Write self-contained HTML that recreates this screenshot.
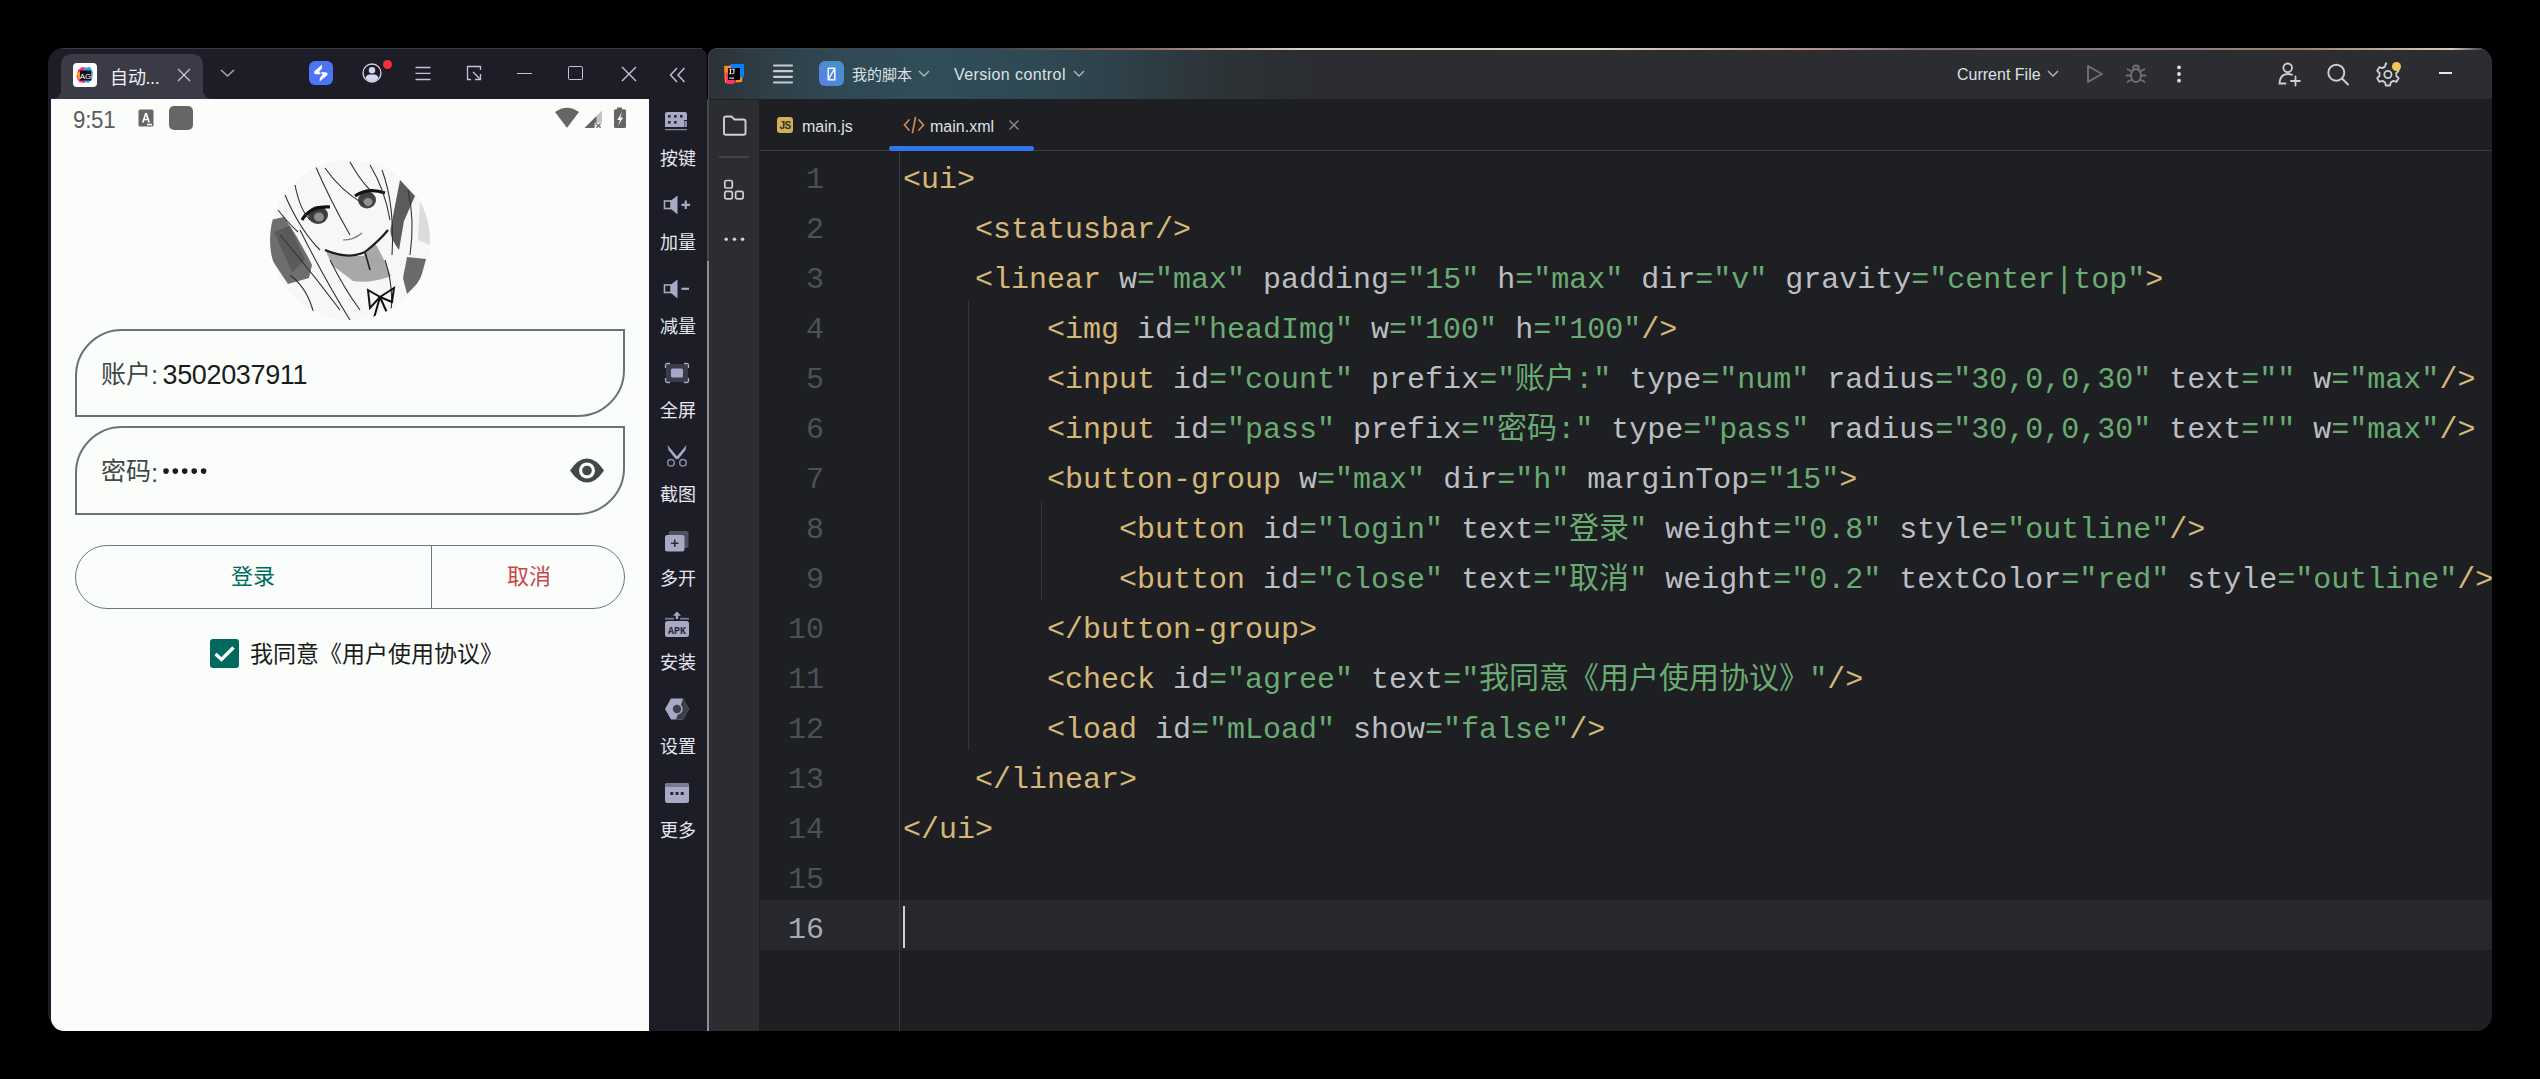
<!DOCTYPE html>
<html lang="zh-CN"><head><meta charset="utf-8">
<style>
*{margin:0;padding:0;box-sizing:border-box}
html,body{width:2540px;height:1079px;overflow:hidden;background:#000;font-family:"Liberation Sans",sans-serif;position:relative}
div,span.abs,svg{position:absolute}
.cl,.cl *{position:static}
.code div{position:relative}
.code{left:0;top:0;font-family:"Liberation Mono",monospace;font-size:30px;white-space:pre;line-height:50px}
.t{color:#d5b778}.a{color:#bcbec4}.v{color:#6aab73}
.ln{left:0;width:116px;text-align:right;font-family:"Liberation Mono",monospace;font-size:30px;color:#4b5059;line-height:50px;white-space:pre}
.cj{font-family:"Liberation Serif",serif;font-style:normal;line-height:10px;font-weight:300}
.cl{height:50px;line-height:50px;white-space:pre}
.sl{left:649px;width:58px;margin-top:2px;text-align:center;color:#e6e6ee;font-size:18px;line-height:18px}
</style></head><body>

<!-- ===== EMULATOR ===== -->
<div id="emu" style="left:48px;top:48px;width:659px;height:983px;background:#1d1d28;border-radius:15px 9px 0 19px"></div>
<div id="etab" style="left:61px;top:54px;width:142px;height:45px;background:#3b3b47;border-radius:10px 10px 0 0"></div>
<div id="phone" style="left:51px;top:99px;width:598px;height:932px;background:#fbfdfa;border-bottom-left-radius:13px"></div>

<!-- status bar -->
<div style="left:73px;top:104.5px;font-size:24px;line-height:30px;color:#5c5c5c;white-space:nowrap;letter-spacing:-0.3px;transform:scaleX(0.93);transform-origin:0 50%">9:51</div>
<svg style="left:138px;top:109px" width="16" height="18" viewBox="0 0 16 18">
  <rect x="0.5" y="0.5" width="15" height="17" rx="1.5" fill="#666"/>
  <path d="M4 13.5 L7 4 H9 L12 13.5 H10.2 L9.5 11.3 H6.5 L5.8 13.5 Z M7 9.7 H9 L8 6.3 Z" fill="#fff"/>
  <rect x="9" y="14.8" width="5" height="1.5" fill="#fff"/>
</svg>
<div style="left:169px;top:106px;width:24px;height:24px;border-radius:5px;background:#666"></div>
<svg style="left:554px;top:107px" width="26" height="21" viewBox="0 0 26 21"><path d="M1 5 Q13 -3.5 25 5 L13.7 20 Q13 21 12.3 20 Z" fill="#666"/></svg>
<svg style="left:584px;top:110px" width="19" height="19" viewBox="0 0 19 19">
  <path d="M0.5 18 L18 0.5 V18 Z" fill="#c2c2c2"/>
  <path d="M0.5 18 L12.5 6 V12.8 H10.5 V18 Z" fill="#666"/>
  <path d="M12.5 12.8 H18 V18 H10.5 Z" fill="#f9fbf8"/>
  <path d="M12.3 13.6 L16.6 17.8 M16.6 13.6 L12.3 17.8" stroke="#666" stroke-width="1.3"/>
</svg>
<svg style="left:613px;top:107px" width="14" height="22" viewBox="0 0 14 22">
  <path d="M4 0.5 H9 V2.2 H11.5 Q13 2.2 13 3.7 V19.5 Q13 21 11.5 21 H2.5 Q1 21 1 19.5 V3.7 Q1 2.2 2.5 2.2 H4 Z" fill="#666"/>
  <path d="M9 5 L4.3 13 H7 L5 19 L10 10.5 H7.3 L9 5 Z" fill="#fff"/>
</svg>

<!-- avatar -->
<div id="avatar" style="left:270px;top:160px;width:160px;height:160px;border-radius:50%;overflow:hidden;background:#fafafa">
  <svg width="160" height="160" viewBox="0 0 160 160" style="left:0;top:0">
    <rect width="160" height="160" fill="#f7f7f7"/>
    <!-- dark regions -->
    <path d="M0 60 L14 57 Q30 80 42 105 L39 118 L18 124 Q5 105 0 96 Z" fill="#6e6e6e"/>
    <path d="M4 72 L20 66 L35 100 L22 112 Z" fill="#5a5a5a"/>
    <path d="M55 89 Q75 97 93 96 L105 83 Q115 100 121 116 Q100 124 83 121 L62 105 Z" fill="#a8a8a8"/>
    <path d="M130 20 L145 36 L134 61 L129 90 Q118 75 121 67 Q126 40 130 20 Z" fill="#5c5c5c"/>
    <path d="M137 97 L156 99 L150 121 L137 134 L133 118 Z" fill="#6a6a6a"/>
    <path d="M150 40 L160 60 L160 85 L148 80 Z" fill="#dcdcdc"/>
    <!-- face shadow lines -->
    <path d="M55 90 Q78 100 95 92 Q110 80 118 70" stroke="#1e1e1e" stroke-width="2.2" fill="none"/>
    <path d="M95 92 L100 110" stroke="#222" stroke-width="1.6" fill="none"/>
    <!-- eyes -->
    <ellipse cx="48" cy="55" rx="10" ry="9" fill="#3c3c3c"/>
    <ellipse cx="49" cy="57" rx="5" ry="4.5" fill="#8c8c8c"/>
    <ellipse cx="97" cy="40" rx="9" ry="8.5" fill="#444"/>
    <ellipse cx="98" cy="42" rx="4.5" ry="4" fill="#909090"/>
    <path d="M32 60 Q40 46 60 47" stroke="#111" stroke-width="3.2" fill="none"/>
    <path d="M85 36 Q98 27 115 33" stroke="#111" stroke-width="3.2" fill="none"/>
    <path d="M73 80 Q84 80 92 73" stroke="#777" stroke-width="1.2" fill="none"/>
    <!-- hair lines -->
    <g stroke="#333" stroke-width="1.1" fill="none">
      <path d="M45 5 Q60 40 80 75"/><path d="M55 8 Q70 30 95 45"/><path d="M80 2 Q90 20 100 30"/>
      <path d="M100 5 Q115 30 120 60"/><path d="M112 10 Q125 45 122 95"/><path d="M25 25 Q30 50 40 60"/>
      <path d="M15 35 Q30 70 50 90"/><path d="M10 75 Q40 110 70 150"/><path d="M30 70 Q55 120 80 160"/>
      <path d="M20 115 Q40 130 45 160"/><path d="M115 100 Q125 130 120 160"/><path d="M138 30 Q145 60 140 95"/>
      <path d="M60 100 Q75 130 90 150"/><path d="M8 50 Q20 65 28 72"/>
    </g>
    <!-- ribbon -->
    <g stroke="#111" stroke-width="2" fill="none">
      <path d="M98 130 L110 137 L100 148 Z"/><path d="M110 137 L124 128 L122 142 Z"/><path d="M110 137 L104 158 M110 137 L118 155"/>
    </g>
  </svg>
</div>

<!-- field 1 -->
<div style="left:75px;top:329px;width:550px;height:88px;border:2px solid #6c7470;border-radius:47px 0 47px 0"></div>
<div style="left:100.5px;top:357px;font-size:25px;line-height:34px;color:#3f4844;white-space:nowrap">账户</div>
<div style="left:151px;top:358px;font-size:26px;line-height:34px;color:#3f4844">:</div>
<div style="left:162.5px;top:358px;font-size:27px;line-height:34px;color:#191c1a;letter-spacing:-0.35px;white-space:nowrap">3502037911</div>
<!-- field 2 -->
<div style="left:75px;top:426px;width:550px;height:89px;border:2px solid #6c7470;border-radius:47px 0 47px 0"></div>
<div style="left:100.5px;top:454px;font-size:25px;line-height:34px;color:#3f4844;white-space:nowrap">密码</div>
<div style="left:151px;top:455.5px;font-size:26px;line-height:34px;color:#3f4844">:</div>
<svg style="left:160px;top:465px" width="50" height="12" viewBox="0 0 50 12" fill="#1a1c1b"><circle cx="6" cy="6.1" r="2.8"/><circle cx="15.3" cy="6.1" r="2.8"/><circle cx="24.7" cy="6.1" r="2.8"/><circle cx="34.2" cy="6.1" r="2.8"/><circle cx="43.6" cy="6.1" r="2.8"/></svg>
<svg style="left:569px;top:457px" width="36" height="27" viewBox="0 0 36 27">
  <path d="M1 13.5 Q9 1.5 18 1.5 Q27 1.5 35 13.5 Q27 25.5 18 25.5 Q9 25.5 1 13.5 Z" fill="#404944"/>
  <circle cx="18" cy="13.5" r="8" fill="#f9fbf8"/>
  <circle cx="18" cy="13.5" r="4.8" fill="#404944"/>
</svg>

<!-- button group -->
<div style="left:75px;top:545px;width:550px;height:64px;border:1.3px solid #6f7874;border-radius:32px"></div>
<div style="left:431px;top:545px;width:1.2px;height:64px;background:#717a77"></div>
<div style="left:75px;top:545px;width:356px;height:64px;font-size:22px;line-height:64px;text-align:center;color:#006a5e">登录</div>
<div style="left:432px;top:545px;width:193px;height:64px;font-size:22px;line-height:64px;text-align:center;color:#c8484a">取消</div>

<!-- checkbox -->
<div style="left:210px;top:639px;width:29px;height:29px;border-radius:3px;background:#006a5e"></div>
<svg style="left:210px;top:639px" width="29" height="29" viewBox="0 0 29 29" fill="none" stroke="#fff" stroke-width="3.3"><path d="M5.5 15 L11.5 20.5 L23.5 8.5"/></svg>
<div style="left:250px;top:638px;font-size:23px;line-height:32px;color:#191c1a;white-space:nowrap">我同意《用户使用协议》</div>

<!-- emulator top border line -->
<div style="left:62px;top:48px;width:640px;height:1px;background:#3a3a44"></div>
<!-- tab flare bottom corners -->
<div style="left:53px;top:91px;width:8px;height:8px;background:radial-gradient(circle at 0 0, #1d1d28 7.5px, #3b3b47 8px)"></div>
<div style="left:203px;top:91px;width:8px;height:8px;background:radial-gradient(circle at 100% 0, #1d1d28 7.5px, #3b3b47 8px)"></div>
<!-- AG icon -->
<div style="left:73px;top:63px;width:24px;height:24px;border-radius:4px;background:#fff"></div>
<svg style="left:73px;top:63px" width="24" height="24" viewBox="0 0 24 24">
  <path d="M5 7 L9 4 L14 5 L12 20 L6 19 L3.5 14 Z" fill="#f0307a"/>
  <path d="M4 10 L8 8 L9 15 L5 16 Z" fill="#ff9a1a"/>
  <path d="M11 5 L17 4 L20 9 L19 17 L15 20 L11 18 Z" fill="#22a8f0"/>
  <rect x="7" y="7.5" width="11" height="10" fill="#1a0a10"/>
  <text x="12.5" y="15.6" font-size="8" fill="#fff" text-anchor="middle" font-family="Liberation Sans">AG</text>
</svg>
<div style="left:110px;top:65.5px;font-size:18px;line-height:24px;color:#f0f0f5;white-space:nowrap;letter-spacing:-0.3px">自动...</div>
<svg style="left:177px;top:68px" width="14" height="14" viewBox="0 0 14 14" fill="none" stroke="#c8c8d0" stroke-width="1.2"><path d="M1 1 L13 13 M13 1 L1 13"/></svg>
<svg style="left:220px;top:68px" width="15" height="10" viewBox="0 0 15 10" fill="none" stroke="#a8a8b4" stroke-width="1.5"><path d="M1 2 L7.5 8 L14 2"/></svg>
<!-- lightning -->
<div style="left:309px;top:61px;width:24px;height:24px;border-radius:6px;background:#4b74f6"></div>
<svg style="left:309px;top:61px" width="24" height="24" viewBox="0 0 24 24" fill="#fff"><path d="M12.9 3.4 L5 10.8 Q4.4 12.8 6.5 13.2 L11.8 13.2 L10.2 10.6 L12.9 7.6 Z"/><path d="M11.6 11.2 L17 11.2 Q19.4 12.4 18.4 14 L10.6 20.6 L10.9 16.8 L13.6 13.8 Z"/></svg>
<!-- avatar -->
<svg style="left:362px;top:63px" width="20" height="20" viewBox="0 0 20 20">
  <circle cx="10" cy="10" r="9" fill="#1d1d28" stroke="#d6d5ec" stroke-width="1.3"/>
  <circle cx="10" cy="7.3" r="3.2" fill="#d6d5ec"/>
  <path d="M3.6 15.5 Q4 11.6 8 11.6 H12 Q16 11.6 16.4 15.5 Q13.5 18.7 10 18.7 Q6.5 18.7 3.6 15.5 Z" fill="#d6d5ec"/>
</svg>
<div style="left:383px;top:60px;width:9px;height:9px;border-radius:50%;background:#f5303a"></div>
<!-- menu -->
<svg style="left:415px;top:66px" width="16" height="15" viewBox="0 0 16 15" fill="none" stroke="#c5c3da" stroke-width="1.3"><path d="M0.5 1.5 H15.5 M0.5 7.4 H15.5 M0.5 13.5 H15.5"/></svg>
<!-- resize -->
<svg style="left:466px;top:65px" width="16" height="16" viewBox="0 0 16 16" fill="none" stroke="#c5c3da" stroke-width="1.3"><path d="M5 14.5 H1.5 V1.5 H14.5 V5 M7 7 L13.5 13.5 M9 14.5 H14.5 V9"/></svg>
<!-- minimize -->
<div style="left:517px;top:73px;width:15px;height:1.4px;background:#c5c3da"></div>
<!-- maximize -->
<div style="left:568px;top:66px;width:15px;height:14px;border:1.4px solid #c5c3da;border-radius:1.5px"></div>
<!-- close -->
<svg style="left:621px;top:66px" width="16" height="16" viewBox="0 0 16 16" fill="none" stroke="#c5c3da" stroke-width="1.4"><path d="M1 1 L15 15 M15 1 L1 15"/></svg>
<!-- << -->
<svg style="left:669px;top:67px" width="17" height="16" viewBox="0 0 17 16" fill="none" stroke="#c5c3da" stroke-width="1.4"><path d="M8 1 L1.5 8 L8 15 M15.5 1 L9 8 L15.5 15"/></svg>

<!-- sidebar divider -->


<!-- sidebar icons -->
<svg style="left:664px;top:111px" width="24" height="20" viewBox="0 0 24 20">
  <path d="M1 3 Q1 1 3 1 H21 Q23 1 23 3 V9 H20 V16 H1 Z" fill="#a9a8c5"/>
  <rect x="20.3" y="10" width="2.7" height="6" fill="#8a89a6"/>
  <g fill="#2a2a34"><rect x="4" y="4" width="2.6" height="2.6"/><rect x="10" y="4" width="2.6" height="2.6"/><rect x="16" y="4" width="2.6" height="2.6"/><rect x="4" y="10" width="2.6" height="2.6"/><rect x="10" y="10" width="2.6" height="2.6"/></g>
  <rect x="1" y="18" width="22" height="1.2" fill="#8a89a6"/>
</svg>
<div class="sl" style="top:148px">按键</div>
<svg style="left:663px;top:195px" width="28" height="20" viewBox="0 0 28 20">
  <rect x="1.5" y="6" width="6.5" height="7.5" fill="none" stroke="#a9a8c5" stroke-width="1.6"/>
  <path d="M8 5.5 L14.5 0.5 V19.5 L8 14 Z" fill="#a9a8c5"/>
  <path d="M18.5 9.8 H27 M22.75 5.5 V14" stroke="#a9a8c5" stroke-width="2.2"/>
</svg>
<div class="sl" style="top:232px">加量</div>
<svg style="left:663px;top:279px" width="28" height="20" viewBox="0 0 28 20">
  <rect x="1.5" y="6" width="6.5" height="7.5" fill="none" stroke="#a9a8c5" stroke-width="1.6"/>
  <path d="M8 5.5 L14.5 0.5 V19.5 L8 14 Z" fill="#a9a8c5"/>
  <path d="M18.5 9.8 H26" stroke="#a9a8c5" stroke-width="2.2"/>
</svg>
<div class="sl" style="top:316px">减量</div>
<svg style="left:664px;top:362px" width="26" height="22" viewBox="0 0 26 22">
  <rect x="2" y="2" width="22" height="18" rx="3" fill="#3b3b4a"/>
  <path d="M1.5 6 V3.5 Q1.5 1.5 3.5 1.5 H6 M20 1.5 H22.5 Q24.5 1.5 24.5 3.5 V6 M24.5 16 V18.5 Q24.5 20.5 22.5 20.5 H20 M6 20.5 H3.5 Q1.5 20.5 1.5 18.5 V16" fill="none" stroke="#a9a8c5" stroke-width="1.3"/>
  <rect x="7" y="6.5" width="12" height="9" rx="1.5" fill="#a9a8c5"/>
</svg>
<div class="sl" style="top:400px">全屏</div>
<svg style="left:665px;top:444px" width="24" height="24" viewBox="0 0 24 24">
  <path d="M2.5 1 L13 13.5 L11 15.5 L3.5 6 Z" fill="#a9a8c5"/>
  <path d="M21.5 1 L11 13.5 L13 15.5 L20.5 6 Z" fill="#a9a8c5"/>
  <circle cx="6" cy="18.7" r="3.3" fill="none" stroke="#8a89a6" stroke-width="1.5"/>
  <circle cx="18" cy="18.7" r="3.3" fill="none" stroke="#8a89a6" stroke-width="1.5"/>
</svg>
<div class="sl" style="top:484px">截图</div>
<svg style="left:664px;top:530px" width="26" height="22" viewBox="0 0 26 22">
  <rect x="4.7" y="1" width="19.8" height="17" rx="2" fill="#505060"/>
  <rect x="1" y="5" width="19.5" height="16.5" rx="2.2" fill="#a9a8c5"/>
  <path d="M7 13.3 H14.5 M10.75 9.5 V17" stroke="#2a2a34" stroke-width="1.5"/>
</svg>
<div class="sl" style="top:568px">多开</div>
<svg style="left:664px;top:610px" width="26" height="28" viewBox="0 0 26 28">
  <path d="M13 1.5 L9 5.8 H11.8 V9 H14.2 V5.8 H17 Z" fill="#a9a8c5"/>
  <rect x="1" y="7.8" width="9" height="1.8" fill="#7a7990"/><rect x="16" y="7.8" width="9" height="1.8" fill="#7a7990"/>
  <rect x="1" y="11" width="24" height="16" rx="2.5" fill="#a9a8c5"/>
  <text x="13" y="24" font-size="10" font-family="Liberation Mono" font-weight="bold" fill="#2a2a34" text-anchor="middle">APK</text>
</svg>
<div class="sl" style="top:652px">安装</div>
<svg style="left:664px;top:697px" width="26" height="24" viewBox="0 0 26 24">
  <path d="M7 1.5 H19 L25 12 L19 22.5 H7 L1 12 Z" fill="#a9a8c5"/>
  <path d="M19 1.5 L25 12 L19 22.5 H12 Z" fill="#3e3e4c"/>
  <circle cx="13" cy="12" r="5.7" fill="#a9a8c5"/>
  <circle cx="13" cy="12" r="4.2" fill="#3e3e4c"/>
</svg>
<div class="sl" style="top:736px">设置</div>
<svg style="left:664px;top:782px" width="26" height="22" viewBox="0 0 26 22">
  <rect x="1" y="1" width="24" height="20" rx="2.5" fill="#a9a8c5"/>
  <rect x="1" y="1" width="24" height="4" rx="1.5" fill="#7a7990"/>
  <g fill="#2a2a34"><rect x="6.3" y="10" width="3" height="3"/><rect x="11.5" y="10" width="3" height="3"/><rect x="16.7" y="10" width="3" height="3"/></g>
</svg>
<div class="sl" style="top:820px">更多</div>

<!-- ===== IDE ===== -->
<div id="ide" style="left:708px;top:48px;width:1784px;height:983px;background:#1e1f22;border-radius:9px 15px 16px 0;overflow:hidden">
  <div id="hdr" style="left:0;top:0;width:1784px;height:51px;background:#2b2d30"></div>
  <div id="strip" style="left:0;top:52px;width:51px;height:932px;background:#2b2d30"></div>
  <div id="tabbd" style="left:52px;top:102px;width:1740px;height:1px;background:#393b40"></div>
  <div id="caretrow" style="left:52px;top:852px;width:1740px;height:50px;background:#26282e"></div>
</div>
<!-- header gradient -->
<div style="left:709px;top:49px;width:700px;height:50px;background:linear-gradient(90deg,#2c3237 0px,#2e3f47 60px,#304a55 140px,#304d58 220px,#2f4953 330px,#2e3e46 430px,#2c3236 520px,rgba(43,45,48,0) 600px);border-top-left-radius:8px"></div>
<!-- top border glow -->
<div style="left:1100px;top:48px;width:1300px;height:1px;background:linear-gradient(90deg,rgba(70,70,75,0),rgba(120,90,90,0.6) 20%,rgba(110,85,85,0.5) 60%,rgba(70,70,75,0))"></div>
<div style="left:709px;top:99px;width:1782px;height:1px;background:#1e1f22"></div>
<!-- IJ logo -->
<svg style="left:723px;top:63px" width="22" height="22" viewBox="0 0 22 22">
  <path d="M1 3 L8 2.5 L8.5 12 L3 20 L2 20 Z" fill="#ff8a1a"/>
  <path d="M2.5 8.5 L12 16 L11 21 L3.5 21 Z" fill="#fe2f6f"/>
  <path d="M7.5 1 L21 1 L21 14 L17 15.5 L9 9 Z" fill="#087cfa"/>
  <path d="M14 14.5 L19.5 14.5 L19 19 L12 19.5 Z" fill="#ff8a1a"/>
  <rect x="5" y="5" width="12" height="12" fill="#000"/>
  <path d="M6.3 6.2 H8.6 M7.45 6.2 V10.7 M6.3 10.7 H8.6 M9.2 6.2 H11.5 M10.9 6.2 V9.8 Q10.9 10.7 9.8 10.7 H9.2" stroke="#fff" stroke-width="1" fill="none"/>
  <rect x="6.2" y="14.6" width="5" height="1" fill="#fff"/>
</svg>
<!-- hamburger -->
<svg style="left:772px;top:63px" width="22" height="22" viewBox="0 0 22 22" stroke="#c9cacf" stroke-width="2.2" stroke-linecap="round">
  <path d="M2 2.5H20M2 8.2H20M2 13.8H20M2 19.5H20"/>
</svg>
<!-- project icon -->
<div style="left:819px;top:61px;width:25px;height:25px;border-radius:6px;background:linear-gradient(45deg,#5b7fe6,#4294c6)"></div>
<svg style="left:819px;top:61px" width="25" height="25" viewBox="0 0 25 25" fill="none" stroke="#fff" stroke-width="1.4">
  <rect x="9.2" y="7.3" width="6.6" height="11.5"/><path d="M9.6 18 L15.4 8"/>
</svg>
<div style="left:852px;top:64px;font-size:15px;line-height:22px;color:#dfe1e5;white-space:nowrap">我的脚本</div>
<svg style="left:918px;top:69px" width="12" height="9" viewBox="0 0 12 9" fill="none" stroke="#b4b6bb" stroke-width="1.4"><path d="M1 2 L6 7 L11 2"/></svg>
<div id="vc" style="left:954px;top:64px;letter-spacing:0.4px;font-size:16px;line-height:22px;color:#dfe1e5;white-space:nowrap">Version control</div>
<svg style="left:1073px;top:69px" width="12" height="9" viewBox="0 0 12 9" fill="none" stroke="#b4b6bb" stroke-width="1.4"><path d="M1 2 L6 7 L11 2"/></svg>
<div id="cf" style="left:1957px;top:64px;font-size:16px;line-height:22px;color:#dfe1e5;white-space:nowrap">Current File</div>
<svg style="left:2047px;top:69px" width="12" height="9" viewBox="0 0 12 9" fill="none" stroke="#b4b6bb" stroke-width="1.4"><path d="M1 2 L6 7 L11 2"/></svg>
<!-- play -->
<svg style="left:2085px;top:64px" width="20" height="20" viewBox="0 0 20 20" fill="none" stroke="#6f7075" stroke-width="1.9" stroke-linejoin="round"><path d="M3 2.2 L17 10 L3 17.8 Z"/></svg>
<!-- bug -->
<svg style="left:2125px;top:64px" width="22" height="20" viewBox="0 0 22 20" fill="none" stroke="#6f7075" stroke-width="1.8" stroke-linecap="round">
  <path d="M8 5 Q8 1.5 11 1.5 Q14 1.5 14 5"/>
  <ellipse cx="11" cy="11.5" rx="5" ry="6.5"/>
  <path d="M6 7 L2.5 5.2 M6 11.5 H1.5 M6 16 L2.5 17.8 M16 7 L19.5 5.2 M16 11.5 H20.5 M16 16 L19.5 17.8"/>
</svg>
<!-- kebab -->
<svg style="left:2175px;top:64px" width="8" height="20" viewBox="0 0 8 20" fill="#dfe1e5"><circle cx="4" cy="3.3" r="1.9"/><circle cx="4" cy="10" r="1.9"/><circle cx="4" cy="16.7" r="1.9"/></svg>
<!-- add user -->
<svg style="left:2276px;top:61px" width="26" height="26" viewBox="0 0 26 26" fill="none" stroke="#ced0d6" stroke-width="1.8" stroke-linecap="round">
  <circle cx="11.7" cy="6.8" r="4.3"/><path d="M16 13.8 Q14.5 13 11.7 13 Q4 13 3.5 22.5 H9.5"/><path d="M19.5 15.5 V24.5 M15 20 H24"/>
</svg>
<!-- search -->
<svg style="left:2325px;top:61px" width="26" height="26" viewBox="0 0 26 26" fill="none" stroke="#ced0d6" stroke-width="1.9" stroke-linecap="round">
  <circle cx="11.3" cy="11.7" r="8"/><path d="M17 17.5 L23 23.5"/>
</svg>
<!-- gear -->
<svg style="left:2375px;top:61px" width="26" height="26" viewBox="0 0 26 26" fill="none" stroke="#ced0d6" stroke-width="1.8" stroke-linejoin="round">
  <path d="M10.8 2.5 H15 L15.8 5.6 L18.4 7.1 L21.5 6.2 L23.6 9.8 L21.3 12 V15 L23.6 17.2 L21.5 20.8 L18.4 19.9 L15.8 21.4 L15 24.5 H10.8 L10 21.4 L7.4 19.9 L4.3 20.8 L2.2 17.2 L4.5 15 V12 L2.2 9.8 L4.3 6.2 L7.4 7.1 L10 5.6 Z"/>
  <circle cx="12.9" cy="13.5" r="3.6"/>
</svg>
<div style="left:2387px;top:57px;width:12px;height:12px;border-radius:50%;background:#2b2d30"></div>
<div style="left:2391.5px;top:61.5px;width:9px;height:9px;border-radius:50%;background:#f2c55c"></div>
<!-- minimize -->
<div style="left:2439px;top:72px;width:13px;height:2px;background:#e8e8ea"></div>

<!-- left tool strip icons -->
<svg style="left:722px;top:115px" width="26" height="22" viewBox="0 0 26 22" fill="none" stroke="#ced0d6" stroke-width="1.9" stroke-linejoin="round">
  <path d="M2 3.5 Q2 1.5 4 1.5 H9.5 L12.5 4.5 H21.5 Q23.5 4.5 23.5 6.5 V18 Q23.5 19.8 21.5 19.8 H4 Q2 19.8 2 18 Z"/>
</svg>
<div style="left:719px;top:156px;width:30px;height:2px;background:#43454a"></div>
<svg style="left:722px;top:178px" width="24" height="24" viewBox="0 0 24 24" fill="none" stroke="#ced0d6" stroke-width="1.7">
  <rect x="2.8" y="2.5" width="7.5" height="7.5" rx="1.8"/><rect x="2.8" y="13.3" width="7.5" height="7.5" rx="1.8"/><rect x="13.6" y="13.3" width="7.5" height="7.5" rx="1.8"/>
</svg>
<svg style="left:722px;top:234px" width="24" height="10" viewBox="0 0 24 10" fill="#ced0d6"><circle cx="4.2" cy="5.3" r="1.8"/><circle cx="12.4" cy="5.3" r="1.8"/><circle cx="20.5" cy="5.3" r="1.8"/></svg>

<!-- tabs -->
<div style="left:777px;top:117px;width:16px;height:16px;border-radius:3px;background:#d2ae56"></div>
<div style="left:777px;top:117px;width:16px;height:16px;font-size:10px;line-height:17px;text-align:center;color:#2b2d30;font-weight:bold;letter-spacing:-0.5px">JS</div>
<div id="mjs" style="left:802px;top:116px;font-size:16px;line-height:22px;color:#dfe1e5;white-space:nowrap">main.js</div>
<svg style="left:903px;top:116px" width="22" height="18" viewBox="0 0 22 18" fill="none" stroke="#d0875a" stroke-width="1.7" stroke-linecap="round">
  <path d="M6 4 L1.5 9 L6 14 M16 4 L20.5 9 L16 14 M12.5 1.5 L9.5 16.5"/>
</svg>
<div id="mxml" style="left:930px;top:116px;font-size:16px;line-height:22px;color:#dfe1e5;white-space:nowrap">main.xml</div>
<svg style="left:1008px;top:119px" width="12" height="12" viewBox="0 0 12 12" fill="none" stroke="#8c8e94" stroke-width="1.3"><path d="M1.5 1.5 L10.5 10.5 M10.5 1.5 L1.5 10.5"/></svg>
<div style="left:889px;top:146px;width:145px;height:5px;border-radius:3px;background:#3574f0"></div>

<div id="ideb" style="left:708px;top:48px;width:1784px;height:983px;border-radius:9px 15px 16px 0;border:1px solid #45464b;border-bottom:none;border-right:none"></div>
<div style="left:707px;top:99px;width:2px;height:162px;background:#46464e"></div>
<div style="left:707px;top:261px;width:2px;height:770px;background:#8e8e92"></div>
<div style="left:1000px;top:48px;width:1482px;height:1.5px;background:linear-gradient(90deg,#45464b 0%,#8a6a6a 10%,#d8d0c8 20%,#ddd6cc 40%,#b89090 55%,#7a6a78 62%,#8a7a88 75%,#a08070 88%,#d8c8c0 98%,#45464b 100%)"></div>
<div style="left:899px;top:151px;width:1px;height:880px;background:#393b40"></div>
<div style="left:968px;top:301px;width:1px;height:449px;background:#34363b"></div>
<div style="left:1041px;top:501px;width:1px;height:99px;background:#34363b"></div>
<div class="ln" style="left:708px;top:155px">1
2
3
4
5
6
7
8
9
10
11
12
13
14
15
<span style="color:#a9abb3">16</span></div>
<div class="code" style="left:903px;top:155px"><div class="cl"><span class="t">&lt;ui&gt;</span></div><div class="cl">    <span class="t">&lt;statusbar/&gt;</span></div><div class="cl">    <span class="t">&lt;linear</span><span class="a"> w</span><span class="v">="max"</span><span class="a"> padding</span><span class="v">="15"</span><span class="a"> h</span><span class="v">="max"</span><span class="a"> dir</span><span class="v">="v"</span><span class="a"> gravity</span><span class="v">="center|top"</span><span class="t">&gt;</span></div><div class="cl">        <span class="t">&lt;img</span><span class="a"> id</span><span class="v">="headImg"</span><span class="a"> w</span><span class="v">="100"</span><span class="a"> h</span><span class="v">="100"</span><span class="t">/&gt;</span></div><div class="cl">        <span class="t">&lt;input</span><span class="a"> id</span><span class="v">="count"</span><span class="a"> prefix</span><span class="v">="<i class="cj">账户</i>:"</span><span class="a"> type</span><span class="v">="num"</span><span class="a"> radius</span><span class="v">="30,0,0,30"</span><span class="a"> text</span><span class="v">=""</span><span class="a"> w</span><span class="v">="max"</span><span class="t">/&gt;</span></div><div class="cl">        <span class="t">&lt;input</span><span class="a"> id</span><span class="v">="pass"</span><span class="a"> prefix</span><span class="v">="<i class="cj">密码</i>:"</span><span class="a"> type</span><span class="v">="pass"</span><span class="a"> radius</span><span class="v">="30,0,0,30"</span><span class="a"> text</span><span class="v">=""</span><span class="a"> w</span><span class="v">="max"</span><span class="t">/&gt;</span></div><div class="cl">        <span class="t">&lt;button-group</span><span class="a"> w</span><span class="v">="max"</span><span class="a"> dir</span><span class="v">="h"</span><span class="a"> marginTop</span><span class="v">="15"</span><span class="t">&gt;</span></div><div class="cl">            <span class="t">&lt;button</span><span class="a"> id</span><span class="v">="login"</span><span class="a"> text</span><span class="v">="<i class="cj">登录</i>"</span><span class="a"> weight</span><span class="v">="0.8"</span><span class="a"> style</span><span class="v">="outline"</span><span class="t">/&gt;</span></div><div class="cl">            <span class="t">&lt;button</span><span class="a"> id</span><span class="v">="close"</span><span class="a"> text</span><span class="v">="<i class="cj">取消</i>"</span><span class="a"> weight</span><span class="v">="0.2"</span><span class="a"> textColor</span><span class="v">="red"</span><span class="a"> style</span><span class="v">="outline"</span><span class="t">/&gt;</span></div><div class="cl">        <span class="t">&lt;/button-group&gt;</span></div><div class="cl">        <span class="t">&lt;check</span><span class="a"> id</span><span class="v">="agree"</span><span class="a"> text</span><span class="v">="<i class="cj">我同意《用户使用协议》</i>"</span><span class="t">/&gt;</span></div><div class="cl">        <span class="t">&lt;load</span><span class="a"> id</span><span class="v">="mLoad"</span><span class="a"> show</span><span class="v">="false"</span><span class="t">/&gt;</span></div><div class="cl">    <span class="t">&lt;/linear&gt;</span></div><div class="cl"><span class="t">&lt;/ui&gt;</span></div><div class="cl">&nbsp;</div><div class="cl">&nbsp;</div></div>
<div id="caret" style="left:903px;top:906px;width:2px;height:42px;background:#ced0d6"></div>

</body></html>
